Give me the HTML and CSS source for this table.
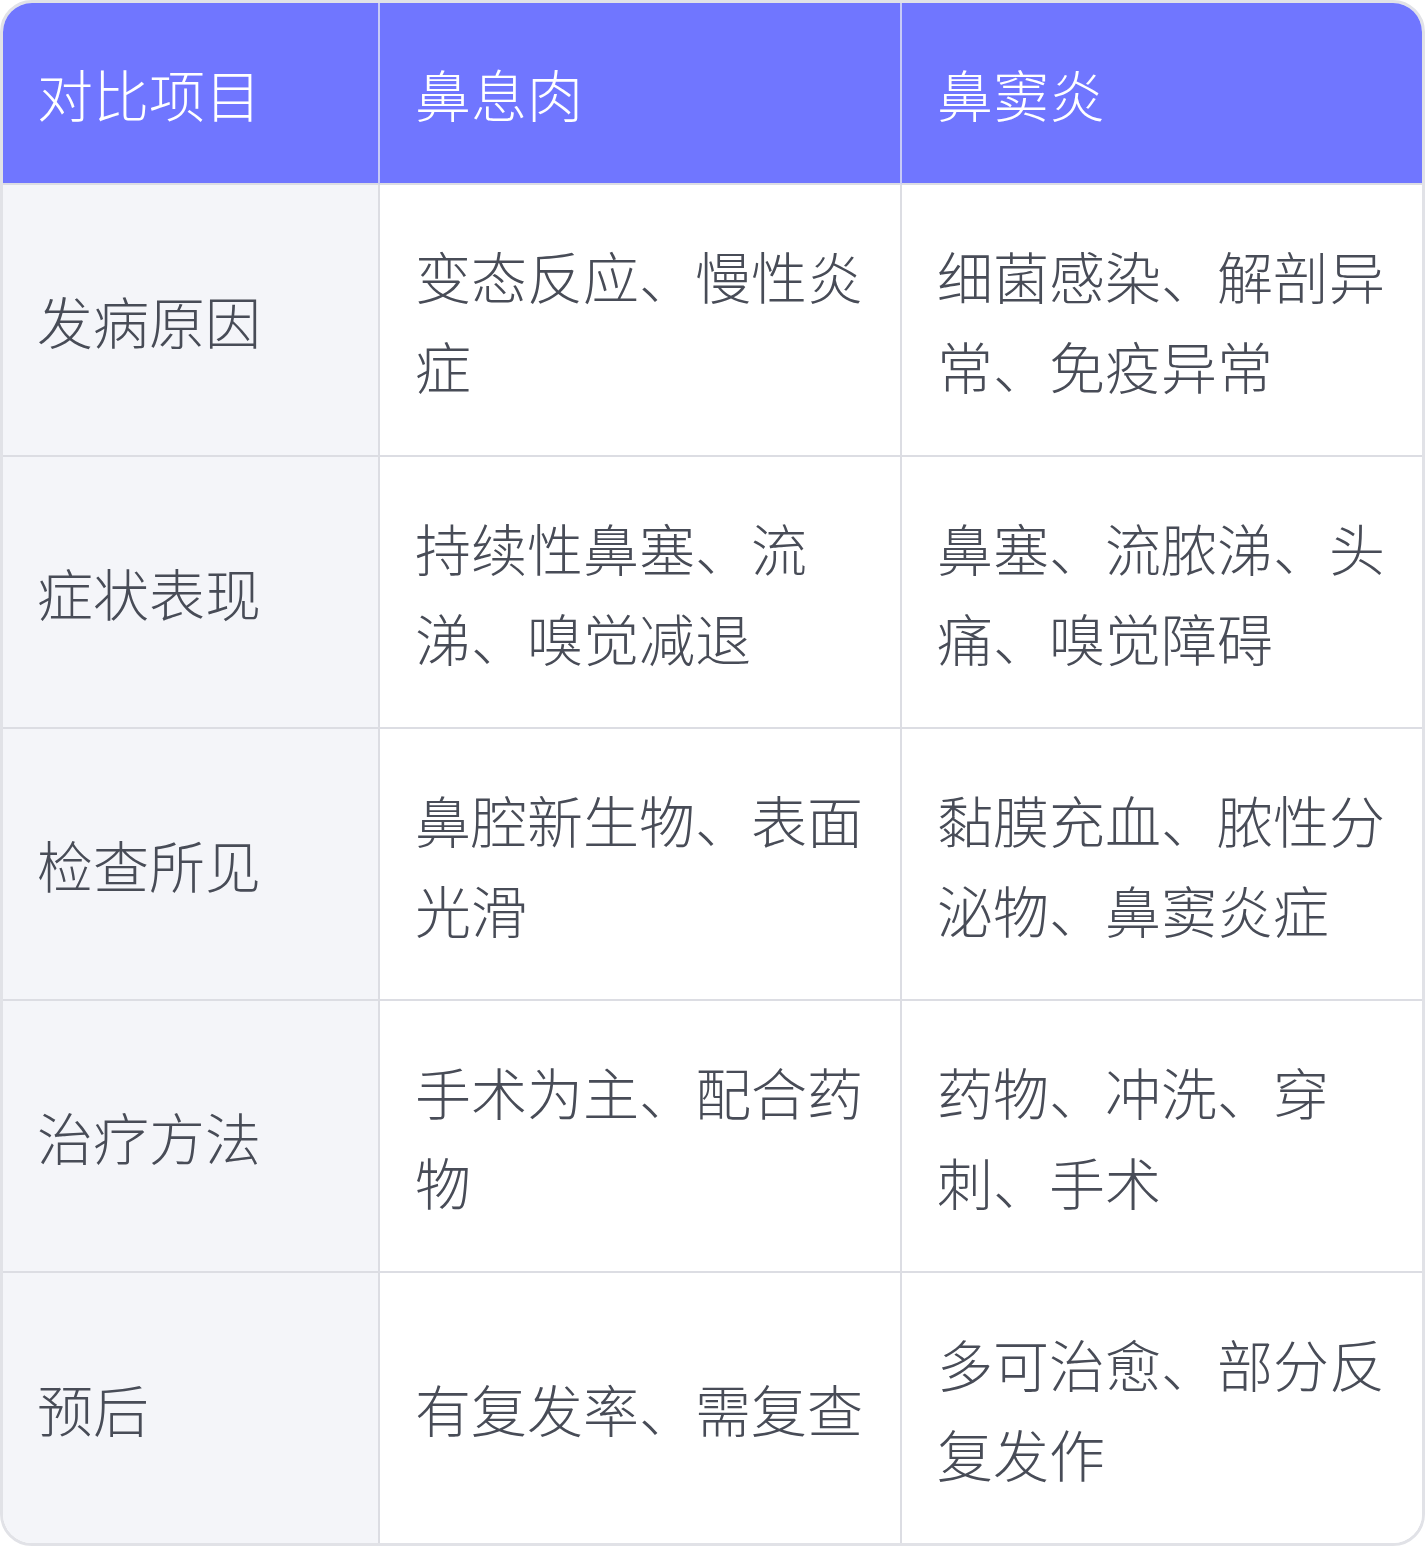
FILE: index.html
```html
<!DOCTYPE html>
<html lang="zh-CN">
<head>
<meta charset="utf-8">
<title>鼻息肉与鼻窦炎对比</title>
<link rel="stylesheet" href="styles.css">
</head>
<body>
<div class="table">
  <div class="cell head c1">对比项目</div>
  <div class="cell head c2">鼻息肉</div>
  <div class="cell head c3">鼻窦炎</div>

  <div class="cell label c1">发病原因</div>
  <div class="cell c2">变态反应、慢性炎症</div>
  <div class="cell c3">细菌感染、解剖异常、免疫异常</div>

  <div class="cell label c1">症状表现</div>
  <div class="cell c2">持续性鼻塞、流涕、嗅觉减退</div>
  <div class="cell c3">鼻塞、流脓涕、头痛、嗅觉障碍</div>

  <div class="cell label c1">检查所见</div>
  <div class="cell c2">鼻腔新生物、表面光滑</div>
  <div class="cell c3">黏膜充血、脓性分泌物、鼻窦炎症</div>

  <div class="cell label c1">治疗方法</div>
  <div class="cell c2">手术为主、配合药物</div>
  <div class="cell c3">药物、冲洗、穿刺、手术</div>

  <div class="cell label c1 last">预后</div>
  <div class="cell c2 last">有复发率、需复查</div>
  <div class="cell c3 last">多可治愈、部分反复发作</div>
</div>
</body>
</html>
```

FILE: styles.css
```css
html, body {
  margin: 0;
  padding: 0;
  background: #ffffff;
}

.table {
  width: 1425px;
  height: 1546px;
  box-sizing: border-box;
  border: 3px solid #e1e2e7;
  border-radius: 32px;
  overflow: hidden;
  display: grid;
  grid-template-columns: 377px 522px 520px;
  grid-template-rows: 182px 272px 272px 272px 272px 270px;
  font-family: "Noto Sans CJK SC", "Noto Sans", sans-serif;
  font-weight: 300;
  font-size: 56px;
  line-height: 90px;
  color: #484c57;
}

.cell {
  box-sizing: border-box;
  display: flex;
  align-items: center;
  padding: 0 20px 0 35px;
  border-right: 2px solid #dcdde3;
  border-bottom: 2px solid #dcdde3;
  background: #ffffff;
}

.cell.c1 {
  padding-left: 34px;
}

.cell.c3 {
  border-right: none;
}

.cell.last {
  border-bottom: none;
}

.head {
  background: #7076ff;
  color: #ffffff;
  border-right-color: #c7caf7;
  border-bottom-color: #dcdde3;
}

.label {
  background: #f4f5f9;
}
```
